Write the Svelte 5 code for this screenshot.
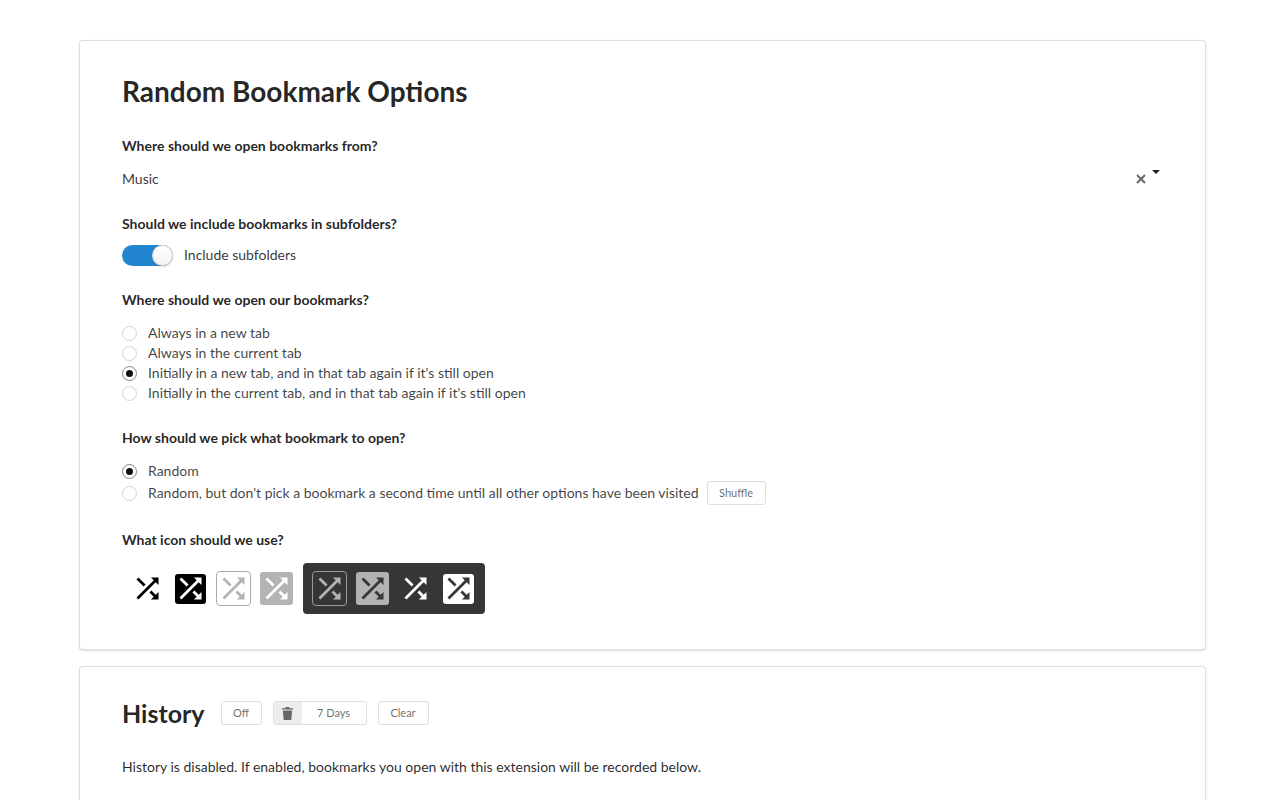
<script>
  const openOptions = [
    'Always in a new tab',
    'Always in the current tab',
    "Initially in a new tab, and in that tab again if it's still open",
    "Initially in the current tab, and in that tab again if it's still open"
  ];

  let includeSubfolders = $state(true);
  let openIn = $state(2);
  let pick = $state(0);

  const shuffle = 'M10.59 9.17L5.41 4 4 5.41l5.17 5.17 1.42-1.41zM14.5 4l2.04 2.04L4 18.59 5.41 20 17.96 7.46 20 9.5V4h-5.5zm.33 9.41l-1.41 1.41 3.13 3.13L14.5 20H20v-5.5l-2.04 2.04-3.13-3.13z';
  const lightIcons = ['plain-black', 'solid-black', 'outline-light', 'solid-light'];
  const darkIcons = ['outline-dark', 'solid-gray', 'plain-white', 'solid-white'];
</script>

{#snippet tile(kind)}
  <button class="tile {kind}" aria-label="icon {kind}">
    <svg viewBox="0 0 24 24" width="33" height="33"><path d={shuffle} /></svg>
  </button>
{/snippet}

<main>
  <section class="card">
    <h1>Random Bookmark Options</h1>

    <div class="label">Where should we open bookmarks from?</div>
    <div class="select">
      <span>Music</span>
      <span class="select-icons">
        <svg class="clear-x" viewBox="0 0 10 10" width="10" height="10"><path d="M1 1l8 8M9 1l-8 8" /></svg>
        <span class="caret"></span>
      </span>
    </div>

    <div class="label">Should we include bookmarks in subfolders?</div>
    <button class="toggle" class:on={includeSubfolders} onclick={() => (includeSubfolders = !includeSubfolders)}>
      <span class="track"><span class="knob"></span></span>
      <span>Include subfolders</span>
    </button>

    <div class="label">Where should we open our bookmarks?</div>
    <div class="radios">
      {#each openOptions as text, i}
        <button class="radio" class:checked={openIn === i} onclick={() => (openIn = i)}>
          <span class="dot"></span>{text}
        </button>
      {/each}
    </div>

    <div class="label">How should we pick what bookmark to open?</div>
    <div class="radios">
      <button class="radio" class:checked={pick === 0} onclick={() => (pick = 0)}>
        <span class="dot"></span>Random
      </button>
      <div class="radio-row">
        <button class="radio" class:checked={pick === 1} onclick={() => (pick = 1)}>
          <span class="dot"></span>Random, but don't pick a bookmark a second time until all other options have been visited
        </button>
        <button class="small-btn shuffle-btn">Shuffle</button>
      </div>
    </div>

    <div class="label">What icon should we use?</div>
    <div class="icon-row">
      <div class="icon-group">
        {#each lightIcons as kind}
          {@render tile(kind)}
        {/each}
      </div>
      <div class="icon-group dark">
        {#each darkIcons as kind}
          {@render tile(kind)}
        {/each}
      </div>
    </div>
  </section>

  <section class="card history">
    <div class="history-head">
      <h2>History</h2>
      <button class="small-btn off-btn">Off</button>
      <div class="days">
        <span class="trash">
          <svg viewBox="0 0 12 14" width="11" height="13"><path d="M4.2 0h3.6l.5 1.2H12v1.5H0V1.2h3.7zM1 3.7h10l-.7 9.2c0 .6-.5 1.1-1.1 1.1H2.8c-.6 0-1.1-.5-1.1-1.1z" /></svg>
        </span>
        <span class="days-text">7 Days</span>
      </div>
      <button class="small-btn clear-btn">Clear</button>
    </div>
    <p>History is disabled. If enabled, bookmarks you open with this extension will be recorded below.</p>
  </section>
</main>

<style>
  :global(body) {
    background: #fff;
    font-family: Lato, "Liberation Sans", sans-serif;
    font-size: 14px;
    line-height: 20px;
    color: rgba(0, 0, 0, 0.87);
    overflow: hidden;
  }

  main {
    width: 1127px;
    margin-left: 79px;
    padding-top: 40px;
  }

  button {
    font: inherit;
    color: inherit;
    background: none;
    border: none;
    padding: 0;
    margin: 0;
    cursor: pointer;
    text-align: left;
  }

  .card {
    box-sizing: border-box;
    height: 610px;
    padding: 31px 42px 0;
    background: #fff;
    border: 1px solid rgba(34, 36, 38, 0.15);
    border-radius: 4px;
    box-shadow: 0 1px 2px 0 rgba(34, 36, 38, 0.15);
    margin-bottom: 16px;
  }

  .history {
    height: 300px;
    padding-top: 29px;
  }

  h1 {
    margin: 0 0 26px;
    font-size: 28px;
    line-height: 38px;
    font-weight: 700;
    color: rgba(0, 0, 0, 0.87);
  }

  h2 {
    margin: 0;
    font-size: 25px;
    line-height: 34px;
    font-weight: 700;
  }

  .label {
    font-weight: 700;
    line-height: 20px;
    margin-bottom: 13px;
  }

  .select {
    display: flex;
    justify-content: space-between;
    height: 20px;
    margin-bottom: 25px;
    padding-right: 3px;
    color: rgba(0, 0, 0, 0.8);
  }

  .select-icons {
    display: flex;
    gap: 6px;
    align-items: flex-start;
    padding-top: 0;
  }

  .clear-x {
    margin-top: 5px;
    fill: none;
    stroke: #666;
    stroke-width: 2;
  }

  .caret {
    width: 0;
    height: 0;
    margin-top: 1px;
    border-left: 4px solid transparent;
    border-right: 4px solid transparent;
    border-top: 4px solid #222;
  }

  .toggle {
    display: flex;
    align-items: center;
    gap: 11px;
    height: 22px;
    margin: -3px 0 24px;
    color: rgba(0, 0, 0, 0.8);
  }

  .track {
    display: block;
    position: relative;
    width: 51px;
    height: 21px;
    border-radius: 11px;
    background: rgba(0, 0, 0, 0.1);
  }

  .toggle.on .track {
    background: #2185d0;
  }

  .knob {
    position: absolute;
    left: 0;
    top: 0;
    width: 21px;
    height: 21px;
    border-radius: 50%;
    background: #fff linear-gradient(transparent, rgba(0, 0, 0, 0.05));
    box-shadow: 0 1px 2px 0 rgba(34, 36, 38, 0.15), 0 0 0 1px rgba(34, 36, 38, 0.15) inset;
  }

  .toggle.on .knob {
    left: 30px;
  }

  .radios {
    margin-bottom: 25px;
  }

  .radio {
    display: flex;
    align-items: center;
    height: 20px;
    color: rgba(0, 0, 0, 0.75);
  }

  .radio-row {
    display: flex;
    align-items: center;
    gap: 8px;
  }

  .dot {
    box-sizing: border-box;
    position: relative;
    width: 15px;
    height: 15px;
    margin-right: 11px;
    border: 1px solid #d4d4d5;
    border-radius: 50%;
    background: #fff;
  }

  .radio.checked .dot {
    border-color: #85888b;
  }

  .radio.checked .dot::after {
    content: '';
    position: absolute;
    left: 3px;
    top: 3px;
    width: 7px;
    height: 7px;
    border-radius: 50%;
    background: #111;
  }

  .small-btn {
    box-sizing: border-box;
    height: 24px;
    font-size: 11px;
    line-height: 22px;
    text-align: center;
    color: rgba(0, 0, 0, 0.6);
    border: 1px solid #dedede;
    border-radius: 3px;
    background: #fff;
  }

  .shuffle-btn {
    width: 59px;
  }

  .icon-row {
    display: flex;
    align-items: center;
    gap: 9px;
    margin-top: 1px;
  }

  .icon-group {
    display: flex;
    gap: 8px;
    padding: 8px 0 8px 8px;
    border-radius: 4px;
  }

  .icon-group.dark {
    padding: 8px 9px;
    background: #363636;
  }

  .tile {
    box-sizing: border-box;
    display: flex;
    align-items: center;
    justify-content: center;
    width: 35px;
    height: 35px;
    position: relative;
    z-index: 0;
    border-radius: 4px;
  }

  .tile svg {
    flex: none;
    display: block;
  }

  .tile::before {
    content: '';
    position: absolute;
    z-index: -1;
    border-radius: 3px;
  }

  .plain-black { fill: #000; }
  .plain-white { fill: #fff; }

  .solid-black, .solid-white { fill: #fff; }
  .solid-black::before, .solid-white::before { inset: 3px 2px 2px 2px; }
  .solid-black::before { background: #000; }
  .solid-white { fill: #363636; }
  .solid-white::before { background: #fff; }

  .outline-light {
    fill: #b3b3b3;
    border: 1px solid #aaa;
  }

  .outline-dark {
    fill: #b3b3b3;
    border: 1px solid #9a9a9a;
  }

  .solid-light, .solid-gray { fill: #fff; }
  .solid-light::before, .solid-gray::before {
    inset: 1px;
    background: #b3b3b3;
  }
  .solid-gray { fill: #363636; }

  .history-head {
    display: flex;
    align-items: center;
    height: 34px;
  }

  .off-btn {
    width: 41px;
    margin-left: 16px;
  }

  .days {
    box-sizing: border-box;
    display: flex;
    width: 94px;
    height: 24px;
    margin: 0 11px;
    border: 1px solid #dedede;
    border-radius: 3px;
    overflow: hidden;
  }

  .trash {
    display: flex;
    align-items: center;
    justify-content: center;
    width: 28px;
    background: #ececec;
    fill: #666;
  }

  .days-text {
    flex: 1;
    font-size: 11px;
    line-height: 22px;
    text-align: center;
    color: rgba(0, 0, 0, 0.6);
  }

  .clear-btn {
    width: 51px;
  }

  .history p {
    margin: 0;
    padding-top: 27px;
    color: rgba(0, 0, 0, 0.85);
  }
</style>
